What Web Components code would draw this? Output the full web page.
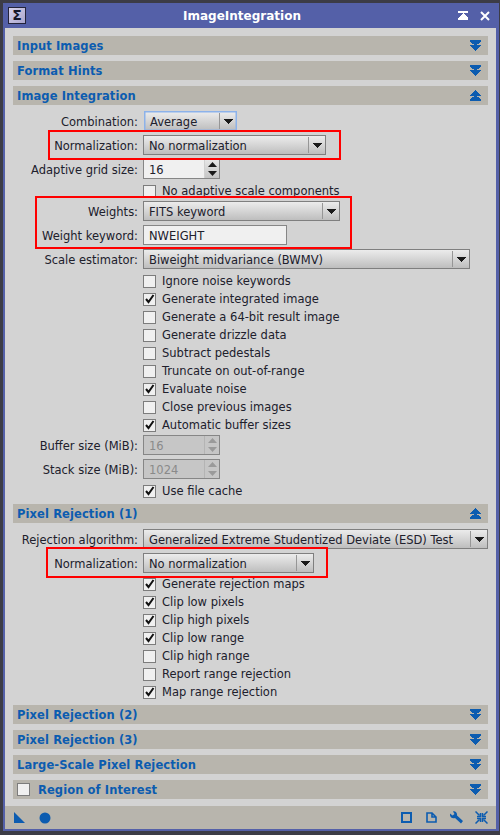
<!DOCTYPE html>
<html>
<head>
<meta charset="utf-8">
<title>ImageIntegration</title>
<style>
  html, body { margin: 0; padding: 0; background: #3c3c46; }
  body { width: 500px; height: 835px; overflow: hidden; font: 11.5px "DejaVu Sans", sans-serif; color: #20202c; }
  /* rows of controls and check boxes don't share the same pitch */
  pi-row + pi-check { margin-top: -1px; }
  pi-check + pi-row { margin-top: 1px; }
</style>
</head>
<body>

<pi-window title="ImageIntegration">
  <pi-section title="Input Images"></pi-section>
  <pi-section title="Format Hints"></pi-section>
  <pi-section title="Image Integration" open>
    <pi-row label="Combination:"><pi-combo focused width="93">Average</pi-combo></pi-row>
    <pi-row label="Normalization:"><pi-combo width="183">No normalization</pi-combo></pi-row>
    <pi-row label="Adaptive grid size:"><pi-spin value="16"></pi-spin></pi-row>
    <pi-check>No adaptive scale components</pi-check>
    <pi-row label="Weights:"><pi-combo width="197">FITS keyword</pi-combo></pi-row>
    <pi-row label="Weight keyword:"><pi-edit width="144">NWEIGHT</pi-edit></pi-row>
    <pi-row label="Scale estimator:"><pi-combo width="327">Biweight midvariance (BWMV)</pi-combo></pi-row>
    <pi-check>Ignore noise keywords</pi-check>
    <pi-check checked>Generate integrated image</pi-check>
    <pi-check>Generate a 64-bit result image</pi-check>
    <pi-check>Generate drizzle data</pi-check>
    <pi-check>Subtract pedestals</pi-check>
    <pi-check>Truncate on out-of-range</pi-check>
    <pi-check checked>Evaluate noise</pi-check>
    <pi-check>Close previous images</pi-check>
    <pi-check checked>Automatic buffer sizes</pi-check>
    <pi-row label="Buffer size (MiB):"><pi-spin value="16" disabled></pi-spin></pi-row>
    <pi-row label="Stack size (MiB):"><pi-spin value="1024" disabled></pi-spin></pi-row>
    <pi-check checked>Use file cache</pi-check>
  </pi-section>
  <pi-section title="Pixel Rejection (1)" open>
    <pi-row label="Rejection algorithm:"><pi-combo width="345">Generalized Extreme Studentized Deviate (ESD) Test</pi-combo></pi-row>
    <pi-row label="Normalization:"><pi-combo width="171">No normalization</pi-combo></pi-row>
    <pi-check checked style="margin-top:-2px">Generate rejection maps</pi-check>
    <pi-check checked>Clip low pixels</pi-check>
    <pi-check checked>Clip high pixels</pi-check>
    <pi-check checked>Clip low range</pi-check>
    <pi-check>Clip high range</pi-check>
    <pi-check>Report range rejection</pi-check>
    <pi-check checked>Map range rejection</pi-check>
  </pi-section>
  <pi-section title="Pixel Rejection (2)"></pi-section>
  <pi-section title="Pixel Rejection (3)"></pi-section>
  <pi-section title="Large-Scale Pixel Rejection"></pi-section>
  <pi-section title="Region of Interest" checkable></pi-section>

  <pi-mark slot="marks" x="48" y="130" w="293" h="30"></pi-mark>
  <pi-mark slot="marks" x="35" y="196" w="317" h="53"></pi-mark>
  <pi-mark slot="marks" x="46" y="547" w="282" h="31"></pi-mark>
</pi-window>

<script>
const BLUE = '#0c5cb0';

// double arrow of the section bars, one [from, to] span per pixel row
const chevronRows = [[0,11],[0,11],[1,10],[2,9],[4,7],[0,11],[1,10],[2,9],[3,8],[4,7],[5,6]];
const chevron = dir => chevronRows.map(([a, b], i) => {
  const y = dir === 'up' ? chevronRows.length - 1 - i : i;
  return `M${a} ${y}h${b - a}v1h-${b - a}z`;
}).join('');

class PiWindow extends HTMLElement {
  constructor() {
    super();
    this.attachShadow({ mode: 'open' }).innerHTML = `
      <style>
        :host { display: block; position: relative; box-sizing: border-box; width: 496px; height: 828px; margin: 3px 0 0 3px; background: #5460a8; padding: 0 3px 2px 2px; }
        .title { display: flex; align-items: center; height: 25px; color: #fff; font: bold 12px "DejaVu Sans", sans-serif; position: relative; }
        .name { flex: 1; text-align: center; }
        .sigma { width: 16px; height: 15px; margin-left: 3px; background: linear-gradient(135deg, #d8d4ee, #a8a4cc); border: 1px solid #23233a; color: #15152a; font: bold 14px/15px "DejaVu Sans", sans-serif; text-align: center; }
        .btns { display: flex; gap: 12px; margin-right: 6px; }
        svg { display: block; }
        .body { display: flex; flex-direction: column; height: 778px; background: #d3d3d3; box-sizing: border-box; padding: 8px 8px 0; }
        .tools { display: flex; align-items: center; height: 23px; background: #b8b5ad; padding: 0 8px 0 9px; }
        .tools svg { fill: none; stroke: ${BLUE}; }
        .spacer { flex: 1; }
      </style>
      <div class="title">
        <div class="sigma">Σ</div>
        <div class="name">${this.getAttribute('title')}</div>
        <div class="btns">
          <svg width="10" height="9" viewBox="0 0 10 9" fill="#fff" shape-rendering="crispEdges"><path d="M0 0h10v1.500h-10zM5 2l5 5v1.500h-10v-1.500z"/></svg>
          <svg width="10" height="10" viewBox="0 0 10 10" stroke="#fff" stroke-width="2" fill="none"><path d="M1 1l8 8M9 1l-8 8"/></svg>
        </div>
      </div>
      <div class="body"><slot></slot></div>
      <div class="tools">
        <svg width="11" height="11" viewBox="0 0 11 11" style="fill:${BLUE};stroke:none"><path d="M0 0l11 11h-11z"/></svg>
        <svg width="12" height="12" viewBox="0 0 12 12" style="margin-left:14px;fill:${BLUE};stroke:none"><circle cx="6" cy="6" r="5.500"/></svg>
        <div class="spacer"></div>
        <svg width="11" height="11" viewBox="0 0 11 11" stroke-width="2" shape-rendering="crispEdges"><path d="M1 1h9v9h-9z"/></svg>
        <svg width="11" height="11" viewBox="0 0 11 11" style="margin-left:14px"><path d="M1 1h5l4 4v5h-9zM6 1v4h4" stroke-width="1.600"/></svg>
        <svg width="13" height="13" viewBox="0 0 13 13" style="margin-left:13px;fill:${BLUE};stroke:none"><path d="M0 2.500l2.500 2 2-1.500-1.500-2.500c2-.8 4.500 1 4 4l6 5.500-2 2.500-6-5.500c-3 1-5.500-1-5-4.500z"/></svg>
        <svg width="13" height="13" viewBox="0 0 13 13" stroke-width="1.500" style="margin-left:12px"><path d="M0.500 0.500l4 4M12.500 0.500l-4 4M0.500 12.500l4-4M12.500 12.500l-4-4"/><path d="M5.500 2v3.500h-3.500M7.500 2v3.500h3.500M5.500 11v-3.500h-3.500M7.500 11v-3.500h3.500"/></svg>
      </div>
      <slot name="marks"></slot>`;
  }
}

class PiSection extends HTMLElement {
  constructor() {
    super();
    const open = this.hasAttribute('open');
    const check = this.hasAttribute('checkable');
    this.attachShadow({ mode: 'open' }).innerHTML = `
      <style>
        :host { display: block; }
        .bar { display: flex; align-items: center; height: 19px; background: #b8b5ad; margin-bottom: 6px; padding: 0 7px 0 4px; color: ${BLUE}; font: bold 11.5px "DejaVu Sans", sans-serif; letter-spacing: .1px; }
        .txt { flex: 1; }
        .box { width: 11px; height: 11px; border: 1px solid #7c7c7c; background: #f0f0f0; margin: 0 8px 0 0; }
        svg { fill: ${BLUE}; display: block; }
        .content { display: ${open ? 'block' : 'none'}; margin-bottom: 4px; }
      </style>
      <div class="bar">
        ${check ? '<div class="box"></div>' : ''}
        <div class="txt">${this.getAttribute('title')}</div>
        <svg width="11" height="11" viewBox="0 0 11 11" shape-rendering="crispEdges"><path d="${chevron(open ? 'up' : 'down')}"/></svg>
      </div>
      <div class="content"><slot></slot></div>`;
  }
}

class PiRow extends HTMLElement {
  constructor() {
    super();
    this.attachShadow({ mode: 'open' }).innerHTML = `
      <style>
        :host { display: flex; align-items: center; height: 20px; margin-bottom: 4px; }
        label { width: 125px; margin-right: 5px; padding-top: 1px; text-align: right; white-space: nowrap; }
      </style>
      <label>${this.getAttribute('label')}</label>
      <slot></slot>`;
  }
}

class PiCombo extends HTMLElement {
  constructor() {
    super();
    this.attachShadow({ mode: 'open' }).innerHTML = `
      <style>
        :host { display: flex; box-sizing: border-box; height: 20px; width: ${this.getAttribute('width')}px;
          border: 1px solid #7f7f7f; background: linear-gradient(#ececec, #bebebe); align-items: center; }
        :host([focused]) { border: 1px solid #8cb2ea; box-shadow: inset 0 0 0 .5px #8cb2ea; margin-left: 1px; }
        .txt { flex: 1; padding: 1px 0 0 5px; white-space: nowrap; overflow: hidden; }
        .arrow { width: 16px; height: 16px; border-left: 1px solid #969696; display: flex; align-items: center; justify-content: center; }
        svg { display: block; }
      </style>
      <div class="txt"><slot></slot></div>
      <div class="arrow"><svg width="9" height="5" viewBox="0 0 9 5" fill="#1a1a1a" shape-rendering="crispEdges"><path d="M0 0h9v1h-1v1h-1v1h-1v1h-1v1h-1v-1h-1v-1h-1v-1h-1z"/></svg></div>`;
  }
}

class PiSpin extends HTMLElement {
  constructor() {
    super();
    const off = this.hasAttribute('disabled');
    const arrow = off ? '#9a9a9a' : '#1a1a1a';
    this.attachShadow({ mode: 'open' }).innerHTML = `
      <style>
        :host { display: flex; box-sizing: border-box; width: 77px; height: 20px; border: 1px solid #868686; background: ${off ? '#c6c6c6' : '#f0f0f0'}; color: ${off ? '#8a8a8a' : 'inherit'}; align-items: center; }
        .txt { flex: 1; padding: 1px 0 0 5px; }
        .arrows { width: 14px; height: 18px; border-left: 1px solid ${off ? '#b4b4b4' : '#d0d0d0'}; display: flex; flex-direction: column; justify-content: space-around; align-items: center; background: ${off ? '#c6c6c6' : 'linear-gradient(#e6e6e6,#c4c4c4)'}; }
        svg { display: block; fill: ${arrow}; }
      </style>
      <div class="txt">${this.getAttribute('value')}</div>
      <div class="arrows">
        <svg width="9" height="5" viewBox="0 0 9 5"><path d="M4.500 0l4.500 5h-9z"/></svg>
        <svg width="9" height="5" viewBox="0 0 9 5"><path d="M0 0h9l-4.500 5z"/></svg>
      </div>`;
  }
}

class PiEdit extends HTMLElement {
  constructor() {
    super();
    this.attachShadow({ mode: 'open' }).innerHTML = `
      <style>
        :host { display: block; box-sizing: border-box; width: ${this.getAttribute('width')}px; height: 20px; border: 1px solid #868686; background: #f0f0f0; padding: 1px 0 0 5px; line-height: 18px; }
      </style>
      <slot></slot>`;
  }
}

class PiCheck extends HTMLElement {
  constructor() {
    super();
    const on = this.hasAttribute('checked');
    this.attachShadow({ mode: 'open' }).innerHTML = `
      <style>
        :host { display: flex; align-items: center; height: 18px; padding-left: 130px; }
        .box { box-sizing: border-box; width: 13px; height: 13px; border: 1px solid #7c7c7c; background: #f0f0f0; margin-right: 6px; position: relative; }
        svg { position: absolute; left: 0; top: -1px; }
      </style>
      <div class="box">${on ? '<svg width="11" height="12" viewBox="0 0 11 12" fill="none" stroke="#111" stroke-width="2"><path d="M2 6l2.500 3 5-7"/></svg>' : ''}</div>
      <slot></slot>`;
  }
}

// red annotation boxes drawn over the screenshot, placed in window coordinates
class PiMark extends HTMLElement {
  constructor() {
    super();
    const a = n => this.getAttribute(n);
    this.attachShadow({ mode: 'open' }).innerHTML = `
      <style>
        :host { position: absolute; box-sizing: border-box; left: ${a('x') - 3}px; top: ${a('y') - 3}px; width: ${a('w')}px; height: ${a('h')}px; border: 2px solid #f00; }
      </style>`;
  }
}

customElements.define('pi-window', PiWindow);
customElements.define('pi-section', PiSection);
customElements.define('pi-row', PiRow);
customElements.define('pi-combo', PiCombo);
customElements.define('pi-spin', PiSpin);
customElements.define('pi-edit', PiEdit);
customElements.define('pi-check', PiCheck);
customElements.define('pi-mark', PiMark);
</script>
</body>
</html>
